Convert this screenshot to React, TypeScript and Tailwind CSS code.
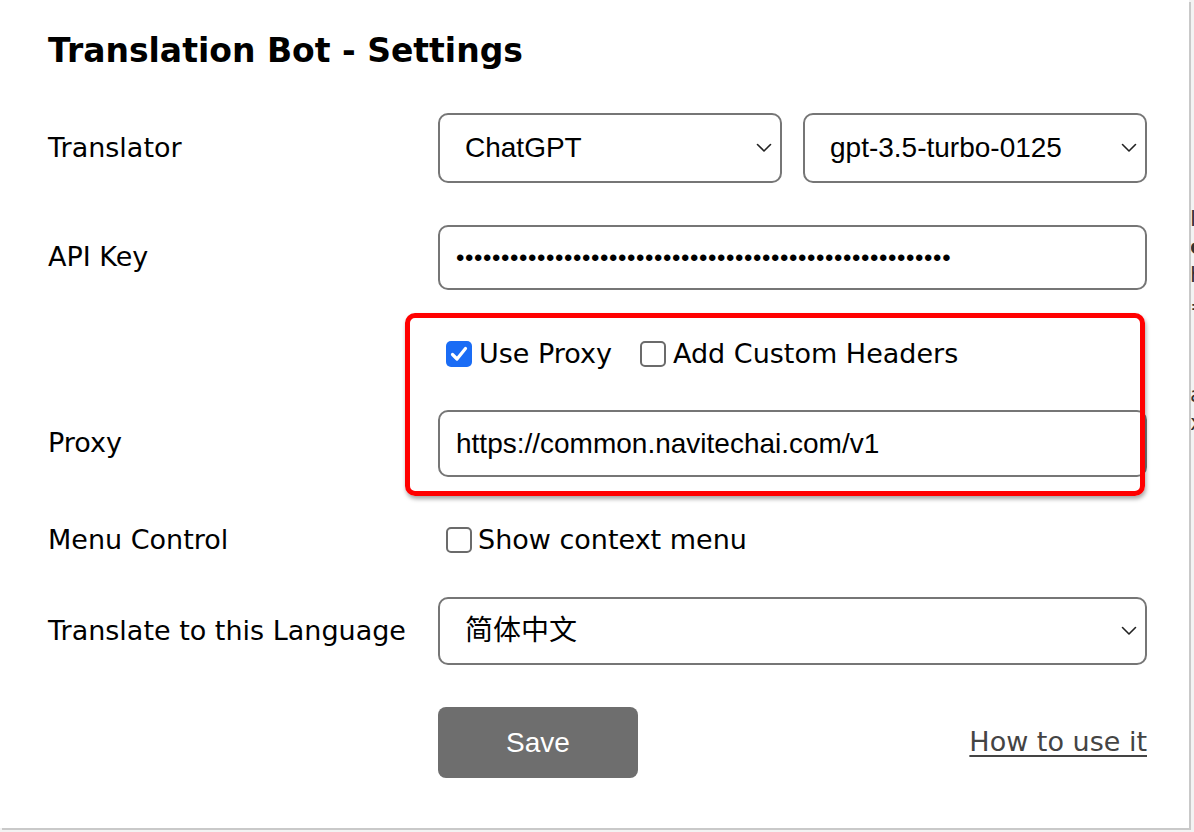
import React from "react";

const labelFont = { fontFamily: '"DejaVu Sans", "Noto Sans", sans-serif' };
const inputFont = { fontFamily: '"Liberation Sans", "Noto Sans CJK SC", sans-serif' };

function Chevron() {
  return (
    <svg width="16" height="10" viewBox="0 0 16 10" fill="none" className="shrink-0">
      <path d="M1.5 1.5 L8 8 L14.5 1.5" stroke="#222" strokeWidth="1.6" strokeLinecap="round" strokeLinejoin="round" />
    </svg>
  );
}

function Select({ value, className }: { value: string; className?: string }) {
  return (
    <div
      className={`flex items-center justify-between rounded-[10px] border-2 border-[#767676] bg-white pl-[25px] pr-[8px] text-[28px] text-black ${className ?? ""}`}
      style={inputFont}
    >
      <span>{value}</span>
      <Chevron />
    </div>
  );
}

function Checkbox({ checked }: { checked?: boolean }) {
  if (checked) {
    return (
      <span className="flex h-[26px] w-[26px] shrink-0 items-center justify-center rounded-[5px] bg-[#1a6cf5]">
        <svg width="18" height="16" viewBox="0 0 18 16" fill="none">
          <path d="M2.5 8.5 L7 13 L15.5 2.5" stroke="white" strokeWidth="3.2" strokeLinecap="round" strokeLinejoin="round" />
        </svg>
      </span>
    );
  }
  return <span className="h-[26px] w-[26px] shrink-0 rounded-[5px] border-2 border-[#6b6b6b] bg-white" />;
}

function Label({ children }: { children: React.ReactNode }) {
  return (
    <div className="w-[390px] shrink-0 whitespace-nowrap text-[27px] text-black" style={labelFont}>
      {children}
    </div>
  );
}

export default function App() {
  return (
    <div className="relative h-[832px] w-[1194px] overflow-hidden bg-[#f3f3f3]">
      {/* background page peeking through on the right */}
      <div className="absolute left-[1190px] top-[205px] flex flex-col text-[22px] leading-[28px] text-[#333]" style={labelFont}>
        <span>l</span>
        <span className="font-bold">c</span>
        <span>h</span>
        <span className="mt-[4px]">=</span>
        <span className="mt-[60px]">a</span>
        <span>x</span>
      </div>

      <div className="relative h-[828px] w-[1189px] bg-white shadow-[2px_2px_0_#c9c9c9] pl-[48px] pr-[42px]">
        <h1 className="pt-[28px] text-[33px] font-bold leading-[46px] text-black" style={labelFont}>
          Translation Bot - Settings
        </h1>

        <div className="mt-[39px] flex items-center">
          <Label>Translator</Label>
          <div className="flex flex-1 gap-[21px]">
            <Select value="ChatGPT" className="h-[70px] flex-1" />
            <Select value="gpt-3.5-turbo-0125" className="h-[70px] flex-1" />
          </div>
        </div>

        <div className="mt-[42px] flex items-center">
          <Label>API Key</Label>
          <div
            className="flex h-[65px] flex-1 items-center overflow-hidden whitespace-nowrap rounded-[10px] border-2 border-[#767676] pl-[16px] text-[24px] tracking-[0.6px] text-black"
            style={inputFont}
          >
            {"•".repeat(55)}
          </div>
        </div>

        <div className="mt-[49px] flex h-[30px] items-center">
          <div className="w-[398px] shrink-0" />
          <div className="flex items-center gap-[7px] text-[27px]" style={labelFont}>
            <Checkbox checked />
            <span>Use Proxy</span>
          </div>
          <div className="ml-[28px] flex items-center gap-[7px] text-[27px]" style={labelFont}>
            <Checkbox />
            <span>Add Custom Headers</span>
          </div>
        </div>

        <div className="mt-[41px] flex items-center">
          <Label>Proxy</Label>
          <div
            className="flex h-[67px] flex-1 items-center rounded-[10px] border-2 border-[#767676] pl-[16px] text-[28px] text-black"
            style={inputFont}
          >
            https://common.navitechai.com/v1
          </div>
        </div>

        <div className="mt-[48px] flex h-[30px] items-center">
          <Label>Menu Control</Label>
          <div className="ml-[8px] flex items-center gap-[6px] text-[27px]" style={labelFont}>
            <Checkbox />
            <span>Show context menu</span>
          </div>
        </div>

        <div className="mt-[42px] flex items-center">
          <Label>Translate to this Language</Label>
          <Select value="简体中文" className="h-[68px] flex-1" />
        </div>

        <div className="mt-[42px] flex items-center">
          <div className="w-[390px] shrink-0" />
          <button
            className="flex h-[71px] w-[200px] items-center justify-center rounded-[8px] bg-[#6e6e6e] text-[28px] text-white"
            style={inputFont}
          >
            Save
          </button>
          <div className="flex-1" />
          <a className="text-[27px] text-[#444] underline underline-offset-[4px]" style={labelFont}>
            How to use it
          </a>
        </div>

        {/* annotation highlight */}
        <div className="pointer-events-none absolute left-[405px] top-[313px] h-[183px] w-[740px] rounded-[10px] border-[5px] border-[#ff0000] shadow-[1px_3px_4px_rgba(0,0,0,0.35)]" />
      </div>
    </div>
  );
}
